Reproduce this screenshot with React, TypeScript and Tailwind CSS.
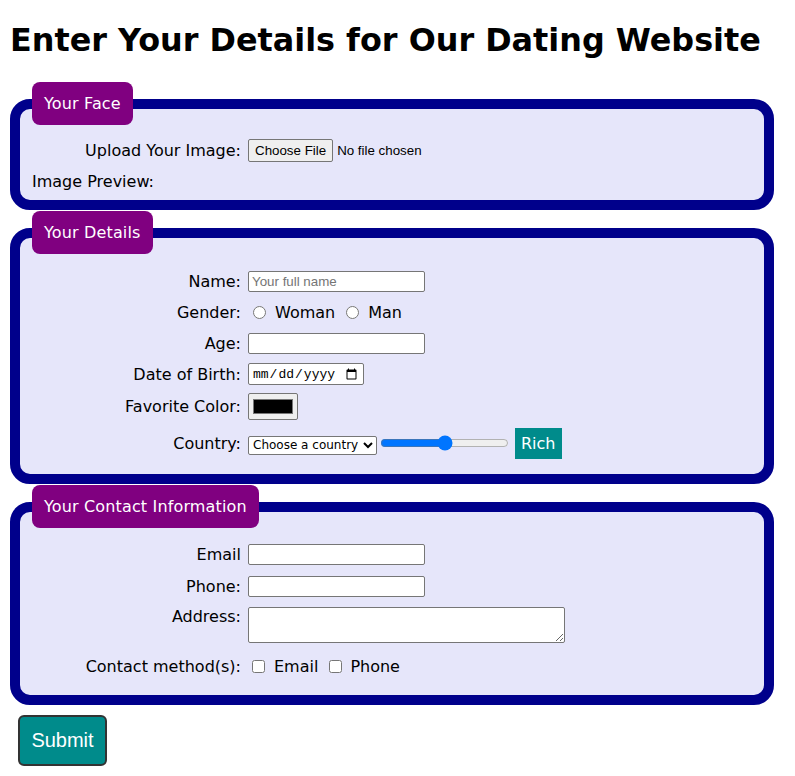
import type { ReactNode } from "react";

const labelClass = "w-[216px] shrink-0 pr-[7px] text-right";
const textInput =
  "h-[21px] w-[177px] rounded-[2px] border border-[#767676] bg-white px-[3px] font-['Liberation_Sans'] text-[13.33px] text-black placeholder:text-[#757575]";

function Section({ title, children }: { title: string; children: ReactNode }) {
  return (
    <fieldset className="mx-[10px] w-[764px] rounded-[20px] border-[10px] border-[#00008b] bg-[#e6e6fa] px-[12px]">
      <legend className="rounded-[8px] bg-[#800080] px-[12px] py-[12px] leading-[19px] tracking-[0.15px] text-white">
        {title}
      </legend>
      {children}
    </fieldset>
  );
}

function Row({ label, className, children }: { label: string; className: string; children?: ReactNode }) {
  return (
    <div className={`flex items-center ${className}`}>
      <label className={labelClass}>{label}</label>
      {children}
    </div>
  );
}

export default function App() {
  return (
    <div className="min-h-[776px] bg-white pb-[10px] font-['DejaVu_Sans',Verdana,sans-serif] text-[16px] leading-[19px] text-black">
      <h1 className="mx-[10px] pt-[22px] pb-[23px] text-[31.85px] leading-[37px] font-bold">
        Enter Your Details for Our Dating Website
      </h1>

      <div className="flex flex-col gap-[1px]">
        <Section title="Your Face">
          <div className="pt-[10px] pb-[3px]">
            <Row label="Upload Your Image:" className="h-[31px]">
              <input
                type="file"
                className="font-['Liberation_Sans'] text-[13.33px] file:mr-[4px] file:rounded-[2px] file:border file:border-[#767676] file:bg-[#efefef] file:px-[6px] file:py-[1px] file:text-black"
              />
            </Row>
            <div className="flex h-[31px] items-center">
              <label>Image Preview:</label>
            </div>
          </div>
        </Section>

        <Section title="Your Details">
          <div className="pt-[12px] pb-[10px]">
            <Row label="Name:" className="h-[31px]">
              <input type="text" placeholder="Your full name" className={textInput} />
            </Row>
            <Row label="Gender:" className="h-[31px]">
              <input type="radio" name="gender" className="ml-[5px] mr-[9px] h-[13px] w-[13px]" />
              <span>Woman</span>
              <input type="radio" name="gender" className="ml-[11px] mr-[9px] h-[13px] w-[13px]" />
              <span>Man</span>
            </Row>
            <Row label="Age:" className="h-[30px]">
              <input type="text" className={textInput} />
            </Row>
            <Row label="Date of Birth:" className="h-[32px]">
              <input
                type="date"
                className="h-[22px] w-[116px] rounded-[2px] border border-[#767676] bg-white px-[3px] font-['Liberation_Mono'] text-[13px]"
              />
            </Row>
            <Row label="Favorite Color:" className="h-[32px]">
              <button
                type="button"
                aria-label="Favorite color"
                className="flex h-[27px] w-[50px] items-center justify-center rounded-[2px] border border-[#767676] bg-[#efefef]"
              >
                <span className="block h-[15px] w-[40px] border border-[#777] bg-black" />
              </button>
            </Row>
            <Row label="Country:" className="h-[42px]">
              <select className="mt-[4px] h-[19px] w-[129px] rounded-[2px] border border-[#767676] bg-white font-['DejaVu_Sans'] text-[12px] leading-[15px]">
                <option>Choose a country</option>
              </select>
              <input type="range" defaultValue={50} className="ml-[3px] w-[129px]" />
              <span className="ml-[6px] flex h-[31px] items-center bg-[#008b8b] px-[6px] text-white">Rich</span>
            </Row>
          </div>
        </Section>

        <Section title="Your Contact Information">
          <div className="pt-[11px] pb-[14px]">
            <Row label="Email" className="h-[31px]">
              <input type="email" className={textInput} />
            </Row>
            <Row label="Phone:" className="h-[32px]">
              <input type="tel" className={textInput} />
            </Row>
            <div className="flex items-start pt-[5px]">
              <label className={`${labelClass} leading-[20px]`}>Address:</label>
              <textarea className="h-[36px] w-[317px] rounded-[2px] border border-[#767676] bg-white" />
            </div>
            <Row label="Contact method(s):" className="mt-[8px] h-[30px]">
              <input type="checkbox" className="ml-[4px] mr-[9px] h-[13px] w-[13px]" />
              <span>Email</span>
              <input type="checkbox" className="ml-[11px] mr-[8px] h-[13px] w-[13px]" />
              <span>Phone</span>
            </Row>
          </div>
        </Section>
      </div>

      <button
        type="submit"
        className="mt-[10px] ml-[18px] h-[51px] w-[89px] rounded-[6px] border-2 border-[#333] bg-[#008b8b] font-['Liberation_Sans'] text-[20px] text-white"
      >
        Submit
      </button>
    </div>
  );
}
